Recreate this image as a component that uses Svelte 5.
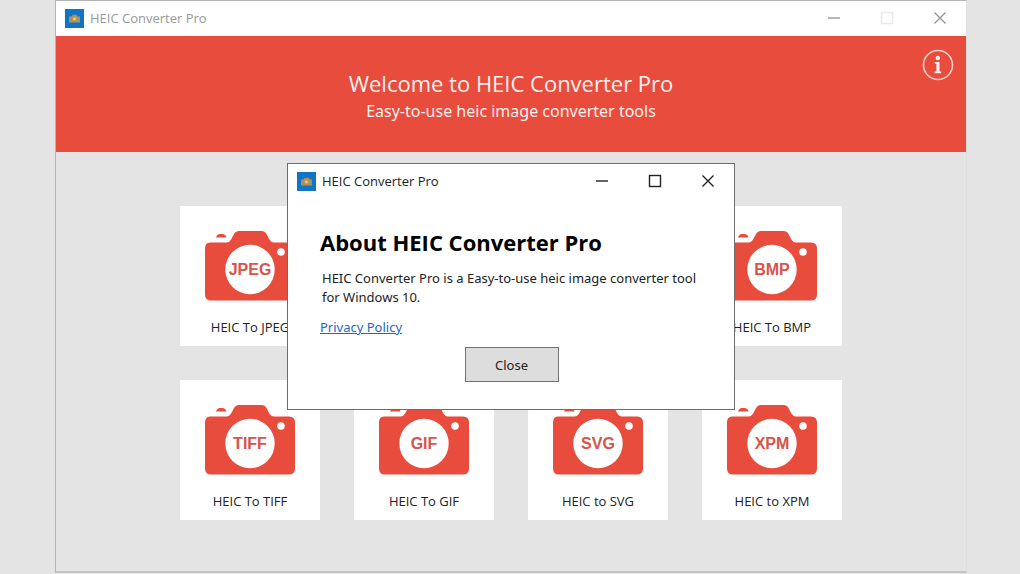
<script>
  const tiles = [
    { format: 'JPEG', label: 'HEIC To JPEG', column: 1 },
    { format: 'BMP', label: 'HEIC To BMP', column: 4 },
    { format: 'TIFF', label: 'HEIC To TIFF', column: 1 },
    { format: 'GIF', label: 'HEIC To GIF', column: 2 },
    { format: 'SVG', label: 'HEIC to SVG', column: 3 },
    { format: 'XPM', label: 'HEIC to XPM', column: 4 }
  ];

  let open = $state(true);
</script>

{#snippet logo()}
  <svg class="logo" viewBox="0 0 19 19" aria-hidden="true">
    <rect width="19" height="19" fill="#1274c4" />
    <path d="M4 7.5h2.5l1.2-1.8h3.8l1.2 1.8H15v6H4z" fill="#a8935f" />
    <circle cx="9.5" cy="10" r="2.4" fill="#d19a4c" />
    <circle cx="9.5" cy="10" r="1.1" fill="#f0dcae" />
  </svg>
{/snippet}

{#snippet controls(onclose)}
  <div class="controls">
    <button type="button" aria-label="Minimize">
      <svg viewBox="0 0 14 14"><path d="M1 7h12" /></svg>
    </button>
    <button type="button" class="maximize" aria-label="Maximize">
      <svg viewBox="0 0 14 14"><rect x="1.500" y="1.500" width="11" height="11" /></svg>
    </button>
    <button type="button" aria-label="Close window" onclick={onclose}>
      <svg viewBox="0 0 14 14"><path d="M1.500 1.500l11 11M12.500 1.500l-11 11" /></svg>
    </button>
  </div>
{/snippet}

<div class="desktop">
  <main class="window">
    <header class="titlebar inactive">
      {@render logo()}
      <span class="caption">HEIC Converter Pro</span>
      {@render controls()}
    </header>

    <section class="banner">
      <h1>Welcome to HEIC Converter Pro</h1>
      <p>Easy-to-use heic image converter tools</p>
      <button type="button" class="info" aria-label="About" onclick={() => (open = true)}>
        <svg viewBox="0 0 32 32" aria-hidden="true">
          <circle cx="16" cy="16" r="14.500" fill="none" stroke="#fbd0ca" stroke-width="1.600" />
          <circle cx="15.800" cy="9" r="2.200" fill="#fff0ee" />
          <path d="M12.800 13h4.700v9.600h1.700v1.700h-6.600v-1.700h1.800v-7.900h-1.600z" fill="#fff0ee" />
        </svg>
      </button>
    </section>

    <div class="tiles">
      {#each tiles as tile}
        <button type="button" class="tile" style:grid-column={tile.column}>
          <svg class="camera" viewBox="0 0 92 72" aria-hidden="true">
            <path class="body" d="M6 12.500h16.500q3 0 4.600-3l2.900-5.500q1.600-3 5-3h22.500q3.400 0 5 3l2.900 5.500q1.600 3 4.600 3H85q6 0 6 6v46q0 6-6 6H7q-6 0-6-6v-46q0-6 5-6z" />
            <path class="body" d="M12 7.500q1-3.500 4-3.500h2.500q3 0 4 3.500z" />
            <circle cx="46" cy="39.500" r="24.700" fill="#fff" />
            <circle cx="77" cy="22" r="3.800" fill="#fff" />
            <text x="46" y="44.500">{tile.format}</text>
          </svg>
          <span>{tile.label}</span>
        </button>
      {/each}
    </div>

    {#if open}
      <div class="dialog" role="dialog" aria-labelledby="about-title">
        <header class="titlebar">
          {@render logo()}
          <span class="caption">HEIC Converter Pro</span>
          {@render controls(() => (open = false))}
        </header>
        <div class="about">
          <h2 id="about-title">About HEIC Converter Pro</h2>
          <p>HEIC Converter Pro is a Easy-to-use heic image converter tool for Windows 10.</p>
          <a href="#privacy">Privacy Policy</a>
          <button type="button" class="close" onclick={() => (open = false)}>Close</button>
        </div>
      </div>
    {/if}
  </main>
</div>

<style>
  :global(body) {
    margin: 0;
    background: #e4e4e4;
  }

  .desktop {
    box-sizing: border-box;
    min-height: 100vh;
    padding: 0 53px 1px 55px;
    display: flex;
    font-family: 'Noto Sans', 'Open Sans', sans-serif;
    font-size: 13px;
    color: #222;
  }

  button {
    font: inherit;
    color: inherit;
    border: 0;
    padding: 0;
    margin: 0;
    background: none;
  }

  .window {
    position: relative;
    flex: 1;
    box-sizing: border-box;
    border: 1px solid #b4b4b4;
    border-right-color: #dedede;
    border-bottom-color: #c4c4c4;
    border-bottom-width: 2px;
  }

  .titlebar {
    display: flex;
    align-items: center;
    height: 34px;
    padding: 0 6px 0 9px;
    background: #fff;
  }

  .logo {
    width: 19px;
    height: 19px;
    margin-right: 6px;
  }

  .caption {
    flex: 1;
    font-family: 'Open Sans', 'Noto Sans', sans-serif;
  }

  .controls {
    display: flex;
  }

  .controls button {
    display: flex;
    align-items: center;
    justify-content: center;
    width: 40px;
    height: 30px;
    margin-left: 13px;
  }

  .controls svg {
    width: 14px;
    height: 14px;
    fill: none;
    stroke: #222;
    stroke-width: 1.400;
  }

  .titlebar.inactive {
    border-bottom: 1px solid #fff;
    color: #999;
  }

  .inactive .controls svg {
    stroke: #999;
  }

  .inactive .controls .maximize {
    opacity: 0.200;
  }

  .banner {
    position: relative;
    box-sizing: border-box;
    padding: 31px 0 27px;
    background: #e84c3d;
    color: #fff0ee;
    text-align: center;
  }

  h1 {
    margin: 0;
    font-family: 'Open Sans', 'Noto Sans', sans-serif;
    font-size: 22px;
    line-height: 32px;
    font-weight: 400;
  }

  .banner p {
    margin: 0;
    font-size: 16px;
    line-height: 24px;
    padding-bottom: 2px;
  }

  .info {
    position: absolute;
    top: 13px;
    right: 12px;
    width: 32px;
    height: 32px;
  }

  .info svg {
    display: block;
  }

  .tiles {
    display: grid;
    grid-template-columns: repeat(4, 140px);
    justify-content: center;
    gap: 34px;
    padding: 54px 0 50px;
  }

  .tile {
    display: flex;
    flex-direction: column;
    align-items: center;
    gap: 15px;
    height: 140px;
    box-sizing: border-box;
    padding-top: 24px;
    background: #fff;
    font-family: 'Open Sans', 'Noto Sans', sans-serif;
    line-height: 20px;
  }

  .camera {
    width: 92px;
    height: 72px;
  }

  .camera .body {
    fill: #e84c3d;
  }

  .camera text {
    fill: #d9534a;
    font: bold 16px 'Liberation Sans', Arial, sans-serif;
    text-anchor: middle;
  }

  .dialog {
    position: absolute;
    top: 162px;
    left: 50%;
    transform: translateX(-50%);
    box-sizing: border-box;
    width: 448px;
    border: 1px solid #6b6b70;
    background: #fff;
  }

  .about {
    display: flex;
    flex-direction: column;
    align-items: flex-start;
    padding: 28px 31px 27px 32px;
  }

  h2 {
    margin: 0;
    font-family: 'Open Sans', 'Noto Sans', sans-serif;
    font-size: 22px;
    line-height: 32px;
    font-weight: 700;
    color: #000;
  }

  .about p {
    margin: 11px 0 10px;
    padding-left: 2px;
    line-height: 19px;
  }

  a {
    line-height: 20px;
    color: #1c69c4;
    text-decoration: underline;
  }

  .close {
    align-self: center;
    width: 94px;
    height: 35px;
    margin-top: 10px;
    border: 1px solid #707070;
    background: #ddd;
  }
</style>
